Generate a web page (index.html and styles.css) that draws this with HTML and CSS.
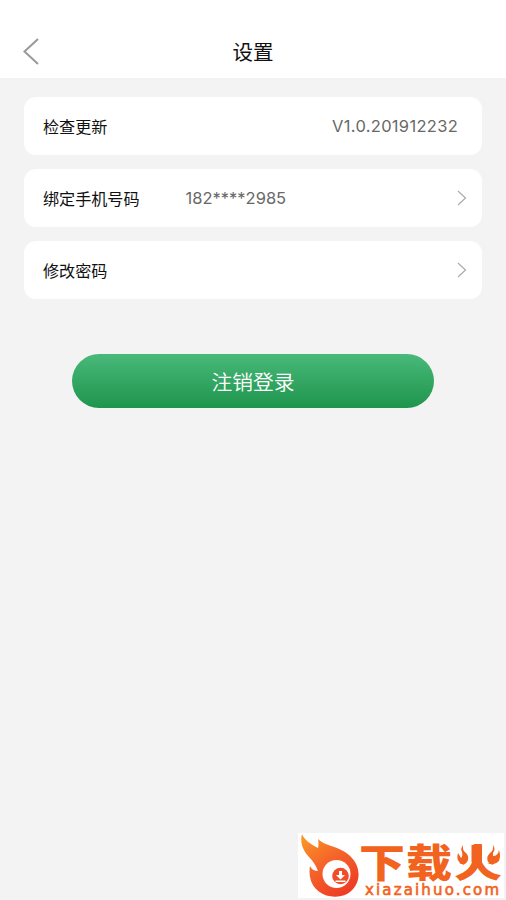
FILE: index.html
```html
<!DOCTYPE html>
<html lang="zh-CN">
<head>
<meta charset="utf-8">
<title>设置</title>
<link rel="stylesheet" href="styles.css">
</head>
<body>
<header class="header">
  <svg class="back" viewBox="0 0 20 30"><path d="M18 3 4.500 15.500 18 28"/></svg>
  <h1 class="title">设置</h1>
</header>
<main class="content">
  <div class="card"><span class="label">检查更新</span><span class="version">V1.0.201912232</span></div>
  <div class="card"><span class="label">绑定手机号码</span><span class="phone">182****2985</span><svg class="arrow" viewBox="0 0 10 16"><path d="M1 1 8.5 8 1 15"/></svg></div>
  <div class="card"><span class="label">修改密码</span><svg class="arrow" viewBox="0 0 10 16"><path d="M1 1 8.5 8 1 15"/></svg></div>
  <button class="logout">注销登录</button>
</main>
<aside class="brand">
  <svg viewBox="0 0 206 65">
    <defs>
      <linearGradient id="flame" x1="0" y1="0" x2=".65" y2="1"><stop offset="0" stop-color="#fb9b25"/><stop offset=".5" stop-color="#f5652a"/><stop offset="1" stop-color="#ee3e26"/></linearGradient>
    </defs>
    <path fill="url(#flame)" d="M4 1C6 7 14 12 20 15Q21 11 20 6C26 13 41 13 51 22C65 34 63 53 49 61C34 68 15 61 12 44Q11 38 12 33Q14 38 20 38Q17 30 11 24C4 16 2 9 4 1Z"/>
    <circle cx="38.500" cy="41" r="14" fill="#fff"/>
    <circle cx="42.500" cy="43" r="8.300" fill="#f04d28"/>
    <path fill="#fff" d="M41 38h3v4h3l-4.500 4.500L38 42h3zM37.500 47.500h10v1.500h-10z"/>
    <g class="brand-name">
      <text x="61" y="43.500" textLength="46" lengthAdjust="spacingAndGlyphs">下</text>
      <text x="108" y="43.500" textLength="46" lengthAdjust="spacingAndGlyphs">载</text>
      <text x="156" y="43.500" textLength="48" lengthAdjust="spacingAndGlyphs">火</text>
    </g>
    <path fill="#fff" d="M156 9h17v21h-17zM186 9h18v21h-18z"/>
    <path fill="#f36320" d="M173.500 12h10.500v17h-10.500z"/>
    <path fill="#f36320" d="M165 12Q164 17 168 20Q172 24 169 29Q166 33 162 30Q158 26 160 20Q162 23 163 25Q165 23 164 19Q162 16 165 12ZM195 12Q198 16 195 20L195 23Q200 23 201 17Q203 23 201 28Q196 33 191 30Q187 25 192 20Q196 17 195 12Z"/>
    <text class="brand-url" x="67" y="62" textLength="134">xiazaihuo.com</text>
  </svg>
</aside>
</body>
</html>
```
FILE: styles.css
```css
* { box-sizing: border-box; }
body {
  margin: 0;
  min-height: 900px;
  background: #f3f3f3;
  color: #111;
  font-family: Inter, "Noto Sans CJK SC", sans-serif;
}
.header {
  display: flex;
  align-items: center;
  height: 78px;
  padding: 24px 20px 0;
  background: #fff;
}
.back { width: 20px; height: 30px; }
.back path, .arrow path { fill: none; stroke: #999; stroke-width: 2; }
.title {
  flex: 1;
  margin: 3px 20px 0 0;
  text-align: center;
  font-size: 20.5px;
  font-weight: 400;
  line-height: 30px;
}
.content {
  display: flex;
  flex-direction: column;
  gap: 14px;
  padding: 19px 24px 0;
}
.card {
  display: flex;
  align-items: center;
  height: 58px;
  padding: 0 15px 0 19px;
  border-radius: 12px;
  background: #fff;
}
.label { margin-top: -1px; font-size: 16.1px; }
.version, .phone { color: #686868; font-size: 16.5px; font-weight: 400; }
.version { margin: 0 9px 0 auto; letter-spacing: .3px; }
.phone { margin-left: 46px; }
.arrow { width: 10px; height: 16px; margin-left: auto; }
.arrow path { stroke: #aaa; stroke-width: 1.2; }
.logout {
  width: 362px;
  height: 54px;
  margin: 41px auto 0;
  padding: 0;
  border: 0;
  border-radius: 27px;
  background: linear-gradient(#49b979, #1e954d);
  color: #fff;
  font: 350 20.8px Inter, "Noto Sans CJK SC", sans-serif;
}
.brand {
  position: absolute;
  left: 298px;
  top: 833px;
  width: 206px;
  height: 65px;
  background: #fff;
}
.brand svg { display: block; width: 206px; height: 65px; }
.brand-name { fill: #f36320; font: 900 39px "Noto Sans CJK SC", sans-serif; }
.brand-url {
  fill: #f36320;
  stroke: #f36320;
  stroke-width: .6px;
  font: 400 15px "DejaVu Sans", sans-serif;
}
```
